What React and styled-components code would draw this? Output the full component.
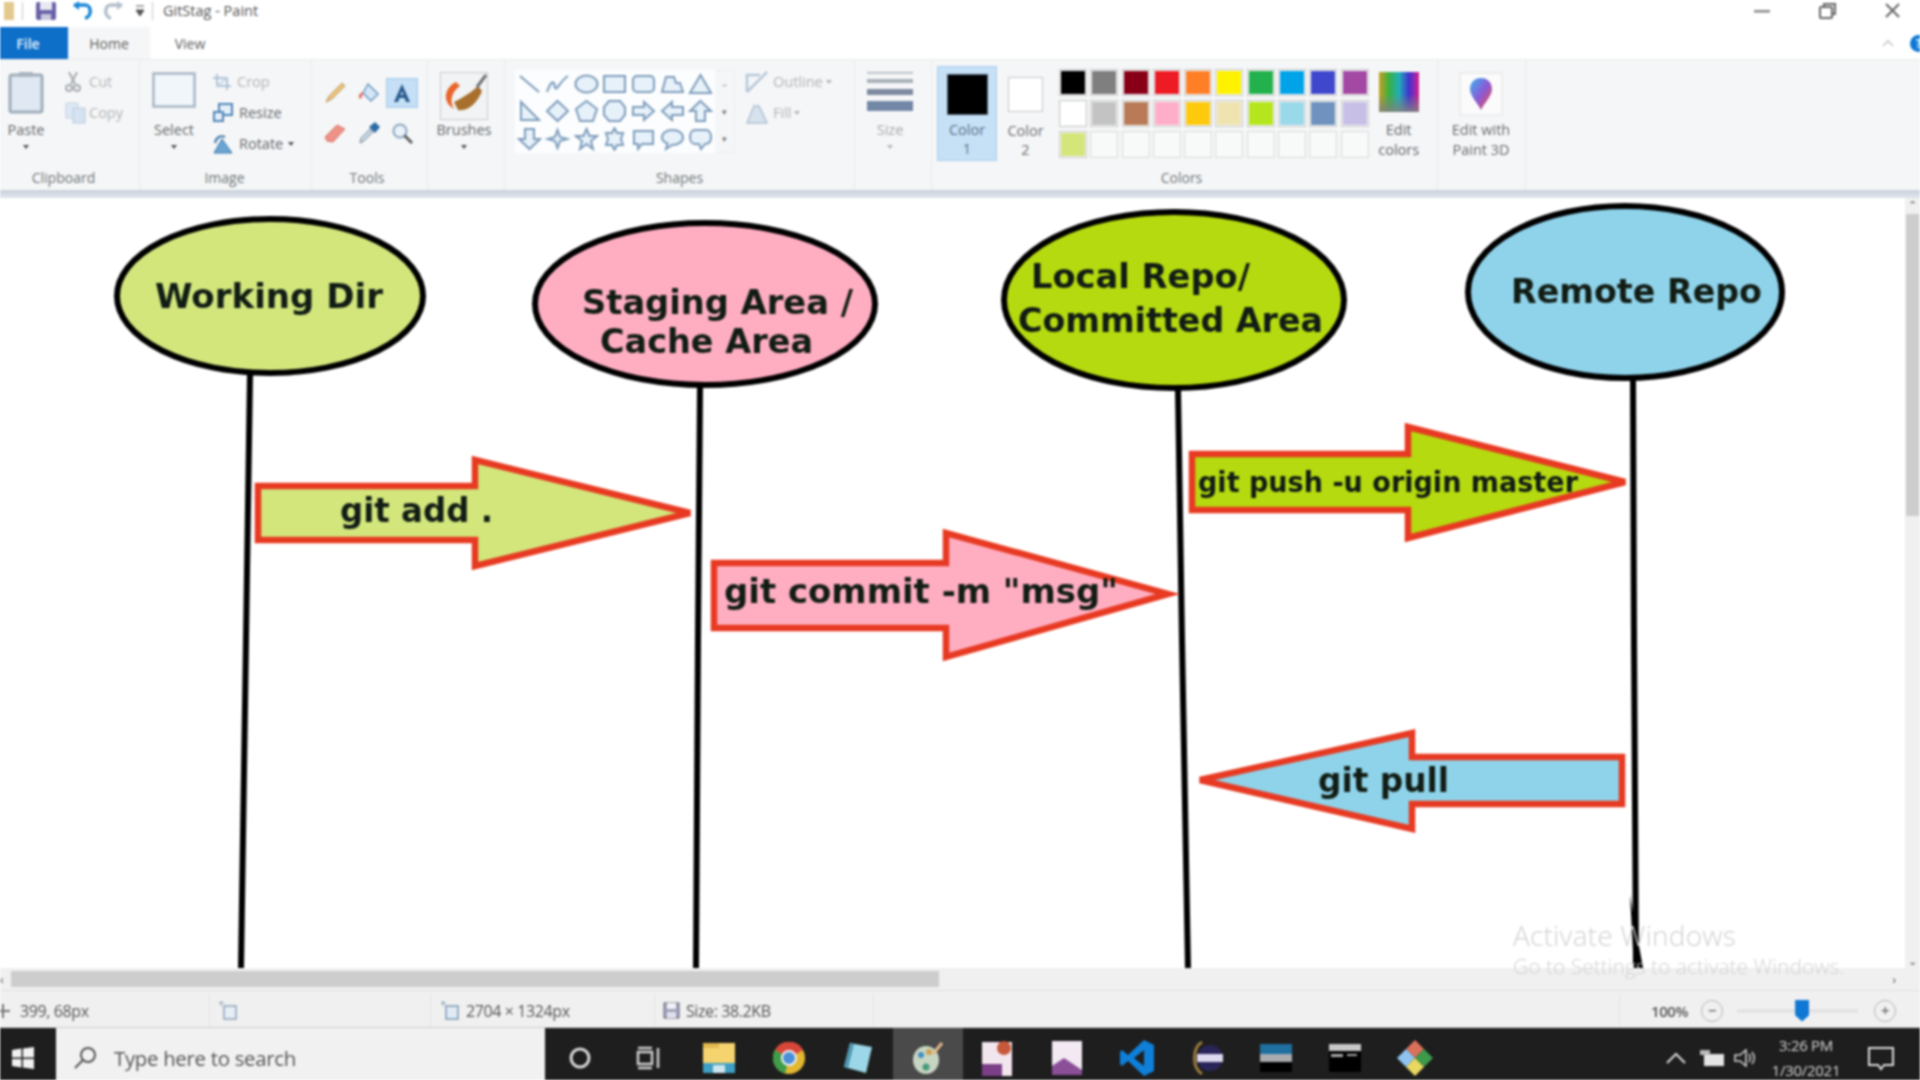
import styled, { createGlobalStyle } from "styled-components";

const GlobalStyle = createGlobalStyle`
  html, body { margin: 0; padding: 0; background: #fff; }
  body { font-family: "Open Sans", "Noto Sans", sans-serif; overflow: hidden; }
`;

const Window = styled.div`
  width: 1920px;
  height: 1080px;
  display: flex;
  flex-direction: column;
  overflow: hidden;
  position: relative;
  filter: blur(0.8px);
`;

/* title bar */
const TitleBar = styled.div`
  height: 27px;
  padding-bottom: 6px;
  box-sizing: border-box;
  display: flex;
  align-items: center;
  background: #fff;
  flex-shrink: 0;
`;
const QuickSlot = styled.div`
  width: ${(p) => p.$w}px;
  display: flex;
  justify-content: center;
  align-items: center;
`;
const Divider = styled.div`
  width: 1px;
  height: 18px;
  background: #c9c9c9;
`;
const TitleText = styled.span`
  margin-left: 10px;
  font-size: 14.5px;
  color: #555;
`;
const WindowControls = styled.div`
  margin-left: auto;
  display: flex;
  align-items: center;
  padding-right: 20px;
  gap: 49px;
`;

/* tabs */
const TabRow = styled.div`
  height: 32px;
  display: flex;
  align-items: stretch;
  background: #fff;
  flex-shrink: 0;
`;
const Tab = styled.div`
  width: ${(p) => p.$w}px;
  display: flex;
  align-items: center;
  justify-content: center;
  box-sizing: border-box;
  padding-right: ${(p) => (p.$file ? 12 : 0)}px;
  font-size: 14px;
  color: ${(p) => (p.$file ? "#e4f0fb" : "#5f5f5f")};
  background: ${(p) => (p.$file ? "#0e6fc9" : p.$active ? "#f5f6f7" : "#fff")};
  font-weight: ${(p) => (p.$file ? 600 : 400)};
`;
const TabRight = styled.div`
  margin-left: auto;
  display: flex;
  align-items: center;
  gap: 16px;
  margin-right: -7px;
`;
const HelpDot = styled.div`
  width: 17px;
  height: 17px;
  border-radius: 50%;
  background: #0f78d4;
  color: #fff;
  font-size: 12px;
  font-weight: 700;
  display: flex;
  align-items: center;
  justify-content: center;
`;

/* ribbon */
const Ribbon = styled.div`
  height: 131px;
  display: flex;
  background: #f5f6f7;
  border-top: 1px solid #e8e9ea;
  box-sizing: border-box;
  flex-shrink: 0;
`;
const Group = styled.div`
  width: ${(p) => p.$w}px;
  display: flex;
  flex-direction: column;
  border-right: 1px solid #e7e9eb;
  box-sizing: border-box;
`;
const GroupBody = styled.div`
  flex: 1;
  display: flex;
  align-items: flex-start;
  padding-top: 6px;
  padding-left: ${(p) => p.$pad || 0}px;
`;
const GroupLabel = styled.div`
  height: 24px;
  line-height: 24px;
  text-align: center;
  padding-right: ${(p) => p.$pr || 0}px;
  font-size: 14px;
  color: #70767a;
`;
const RibbonEdge = styled.div`
  height: 8px;
  background: linear-gradient(#c9d0da, #dfe6ee);
  flex-shrink: 0;
`;
const LargeButton = styled.div`
  width: ${(p) => p.$w}px;
  margin-top: 4px;
  display: flex;
  flex-direction: column;
  align-items: center;
  text-align: center;
  font-size: 14.5px;
  line-height: 20px;
  color: ${(p) => (p.$muted ? "#a9adb1" : "#666a6e")};
`;
const IconSlot = styled.div`
  height: 50px;
  display: flex;
  align-items: flex-start;
  justify-content: center;
  padding-top: 2px;
  box-sizing: border-box;
`;
const Caret = styled.div`
  width: 0;
  height: 0;
  margin-top: 5px;
  border-left: 3.5px solid transparent;
  border-right: 3.5px solid transparent;
  border-top: 4px solid ${(p) => (p.$muted ? "#b5b5b5" : "#555")};
`;
const SmallStack = styled.div`
  margin-left: ${(p) => p.$ml || 0}px;
  display: flex;
  flex-direction: column;
`;
const SmallItem = styled.div`
  height: 31px;
  display: flex;
  align-items: center;
  gap: ${(p) => p.$gap || 6}px;
  font-size: 14.5px;
  color: ${(p) => (p.$muted ? "#b4b8bb" : "#666a6e")};
`;
const InlineCaret = styled(Caret)`
  margin-top: 0;
  margin-left: -1px;
`;
const ToolGrid = styled.div`
  margin: 12px 0 0 7px;
  display: grid;
  grid-template-columns: repeat(3, 32px);
  grid-auto-rows: 30px;
  gap: 10px 1.5px;
`;
const ToolCell = styled.div`
  display: flex;
  align-items: center;
  justify-content: center;
  background: ${(p) => (p.$active ? "#c4dff6" : "transparent")};
  border: 1px solid ${(p) => (p.$active ? "#a5cdee" : "transparent")};
  box-sizing: border-box;
`;
const ShapeGallery = styled.div`
  margin-top: 4px;
  width: 200px;
  height: 83px;
  display: grid;
  grid-template-columns: repeat(7, 1fr);
  grid-auto-rows: 1fr;
  background: #fbfdfe;
  align-items: center;
  justify-items: center;
`;
const GalleryScroll = styled.div`
  margin-top: 4px;
  width: 20px;
  height: 83px;
  display: flex;
  flex-direction: column;
  align-items: center;
  justify-content: space-around;
  border: 1px solid #eceeef;
  border-left: none;
  box-sizing: border-box;
  font-size: 9px;
  color: #777;
`;
const ColorButton = styled.div`
  width: ${(p) => p.$w}px;
  height: 95px;
  margin-left: ${(p) => p.$ml || 0}px;
  display: flex;
  flex-direction: column;
  align-items: center;
  box-sizing: border-box;
  background: ${(p) => (p.$active ? "#c6e0f6" : "transparent")};
  border: 1px solid ${(p) => (p.$active ? "#a9cfee" : "transparent")};
  font-size: 14.5px;
  line-height: 19px;
  text-align: center;
  color: ${(p) => (p.$active ? "#5b7288" : "#6f7276")};
`;
const CurrentSwatch = styled.div`
  width: ${(p) => p.$size}px;
  height: ${(p) => p.$size}px;
  margin-top: ${(p) => p.$mt}px;
  margin-bottom: ${(p) => p.$mb}px;
  background: ${(p) => p.$color};
  border: 1px solid ${(p) => (p.$color === "#000" ? "#4f6170" : "#c6c6c6")};
  box-sizing: border-box;
`;
const PaletteGrid = styled.div`
  margin: 3px 0 0 5px;
  display: grid;
  grid-template-columns: repeat(10, 28px);
  grid-auto-rows: 27px;
  gap: 4px 3.3px;
`;
const PaletteCell = styled.div`
  background: ${(p) => p.$color || "#f8f9f9"};
  border: 1px solid ${(p) => (p.$color ? "#c9c9c9" : "#dcdcdc")};
  box-shadow: inset 0 0 0 1px #f5f6f7;
  box-sizing: border-box;
`;

/* canvas */
const Workspace = styled.div`
  flex: 1;
  display: flex;
  min-height: 0;
  position: relative;
`;
const Canvas = styled.div`
  width: 1905px;
  background: #fff;
  position: relative;
`;
const DiagramSvg = styled.svg`
  display: block;
  width: 1905px;
  height: 770px;
`;
const DiagramLabel = styled.text`
  font-family: "DejaVu Sans", sans-serif;
  font-weight: 700;
  fill: #111c14;
`;
const VScroll = styled.div`
  flex: 1;
  background: #f0f0f0;
  display: flex;
  flex-direction: column;
  align-items: center;
  position: relative;
`;
const VThumb = styled.div`
  width: 13px;
  height: 302px;
  margin-top: 2px;
  background: #cdcdcd;
`;
const ScrollArrow = styled.div`
  font-size: 11px;
  line-height: 14px;
  color: #555;
  margin-top: ${(p) => (p.$auto ? "auto" : "0")};
`;
const HScroll = styled.div`
  height: 22px;
  flex-shrink: 0;
  background: #f0f0f0;
  display: flex;
  align-items: center;
  color: #555;
  font-size: 12px;
`;
const HThumb = styled.div`
  width: 928px;
  height: 16px;
  margin-left: 7px;
  background: #cdcdcd;
`;
const HArrowEnd = styled.span`
  margin-left: auto;
  margin-right: 24px;
`;
const Watermark = styled.div`
  position: absolute;
  left: 1513px;
  top: 720px;
  color: #d2d2d2;
  pointer-events: none;
  z-index: 2;
`;
const WatermarkTitle = styled.div`
  font-size: 28px;
  font-weight: 300;
  line-height: 34px;
  letter-spacing: 0.2px;
`;
const WatermarkSub = styled.div`
  font-size: 21px;
  line-height: 28px;
  font-weight: 300;
  white-space: nowrap;
`;

/* status bar */
const StatusBar = styled.div`
  height: 38px;
  padding-top: 3px;
  flex-shrink: 0;
  display: flex;
  align-items: center;
  background: #f0f0f0;
  border-top: 1px solid #e2e2e2;
  border-bottom: 1px solid #cfcfcf;
  box-sizing: border-box;
  font-size: 16px;
  letter-spacing: -0.4px;
  color: #555;
`;
const StatusCell = styled.div`
  width: ${(p) => p.$w}px;
  height: 100%;
  display: flex;
  align-items: center;
  gap: 6px;
  padding-left: ${(p) => p.$pad}px;
  box-sizing: border-box;
  border-right: 1px solid #e3e3e3;
`;
const ZoomArea = styled.div`
  flex: 1;
  display: flex;
  align-items: center;
  padding-left: 31px;
  font-size: 15px;
  font-weight: 600;
`;
const ZoomCircle = styled.div`
  width: 22px;
  height: 22px;
  margin-left: ${(p) => p.$ml}px;
  border-radius: 50%;
  border: 1.5px solid #b7b7b7;
  box-sizing: border-box;
  display: flex;
  align-items: center;
  justify-content: center;
  font-size: 15px;
  line-height: 1;
  color: #666;
`;
const ZoomTrack = styled.div`
  width: 121px;
  height: 4px;
  margin-left: 14px;
  background: #e3e3e3;
  position: relative;
`;
const ZoomThumb = styled.div`
  position: absolute;
  left: 58px;
  top: -9px;
  width: 14px;
  height: 22px;
  background: #0f78d4;
  clip-path: polygon(0 0, 100% 0, 100% 72%, 50% 100%, 0 72%);
`;

/* taskbar */
const Taskbar = styled.div`
  height: 52px;
  padding-top: 7px;
  box-sizing: border-box;
  flex-shrink: 0;
  display: flex;
  align-items: stretch;
  background: #1e1e1e;
`;
const StartButton = styled.div`
  width: 56px;
  padding-right: 10px;
  box-sizing: border-box;
  display: flex;
  align-items: center;
  justify-content: center;
`;
const SearchBox = styled.div`
  width: 489px;
  margin-top: -7px;
  padding-top: 7px;
  background: #f1f1f1;
  display: flex;
  align-items: center;
  padding-left: 17px;
  gap: 17px;
  box-sizing: border-box;
  font-size: 20.4px;
  letter-spacing: -0.3px;
  color: #555;
`;
const TaskSlot = styled.div`
  width: 69.6px;
  margin-top: ${(p) => (p.$active ? -7 : 0)}px;
  padding-top: ${(p) => (p.$active ? 7 : 0)}px;
  display: flex;
  align-items: center;
  justify-content: center;
  background: ${(p) => (p.$active ? "#4a4a4a" : "transparent")};
`;
const Tray = styled.div`
  margin-left: auto;
  display: flex;
  align-items: center;
  padding-right: 26px;
`;
const TrayItem = styled.div`
  margin-left: ${(p) => p.$ml}px;
  display: flex;
  align-items: center;
`;
const Clock = styled.div`
  margin-left: 10px;
  width: 80px;
  text-align: center;
  font-size: 15px;
  line-height: 25px;
  letter-spacing: -0.3px;
  color: #d8d8d8;
`;

const BLUE = "#7f9dbb";
const TINT = "#e6f1fa";

const shapes = [
  <path d="M3 4 L22 20" />,
  <path d="M2 20 C6 8 9 8 10 15 C11 21 15 9 23 4" />,
  <ellipse cx="12.5" cy="12" rx="11" ry="8.5" />,
  <rect x="2" y="4" width="21" height="16" />,
  <rect x="2" y="4" width="21" height="16" rx="4" />,
  <path d="M2 20 L6 5 H14 L16 11 H20 L23 20 Z" />,
  <path d="M12.5 3 L23 21 H2 Z" />,
  <path d="M4 3 V21 H22 Z" />,
  <path d="M12.5 2 L23 12 L12.5 22 L2 12 Z" />,
  <path d="M12.5 2 L23 10 L19 22 H6 L2 10 Z" />,
  <path d="M7 2 H18 L23 8 V16 L18 22 H7 L2 16 V8 Z" />,
  <path d="M2 8 H13 V3 L23 12 L13 21 V16 H2 Z" />,
  <path d="M23 8 H12 V3 L2 12 L12 21 V16 H23 Z" />,
  <path d="M12.5 2 L23 12 H17 V22 H8 V12 H2 Z" />,
  <path d="M12.5 22 L23 12 H17 V2 H8 V12 H2 Z" />,
  <path d="M12.5 3 L15 10 L22 12 L15 14 L12.5 21 L10 14 L3 12 L10 10 Z" />,
  <path d="M12.5 2 L15.5 9 H23 L17 14 L19 22 L12.5 17 L6 22 L8 14 L2 9 H9.5 Z" />,
  <path d="M12.5 1 L15 6 H21 L19 12 L21 18 H15 L12.5 23 L10 18 H4 L6 12 L4 6 H10 Z" />,
  <path d="M3 4 H22 V17 H11 L7 22 V17 H3 Z" />,
  <path d="M12.5 3 C19 3 23 6.5 23 10.5 C23 15 18 18 12 18 L6 22 L7.5 16.5 C4 15 2 13 2 10.5 C2 6.5 6 3 12.5 3 Z" />,
  <path d="M7 3 H18 C21 3 23 6 23 10 C23 14 21 17 17 17 L13 22 L11 17 H7 C4 17 2 14 2 10 C2 6 4 3 7 3 Z" />,
];

const palette = [
  "#000", "#7f7f7f", "#880015", "#ed1c24", "#ff7f27", "#fff200", "#22b14c", "#00a2e8", "#3f48cc", "#a349a4",
  "#fff", "#c3c3c3", "#b97a57", "#ffaec9", "#ffc90e", "#efe4b0", "#b5e61d", "#99d9ea", "#7092be", "#c8bfe7",
  "#d4e57a", null, null, null, null, null, null, null, null, null,
];

const nodes = [
  { cx: 270, cy: 296, rx: 153, ry: 77, fill: "#d2e67c" },
  { cx: 705, cy: 304, rx: 170, ry: 81, fill: "#ffaec2" },
  { cx: 1174, cy: 300, rx: 170, ry: 88, fill: "#b5da10" },
  { cx: 1625, cy: 292, rx: 157, ry: 86, fill: "#8fd3ea" },
];

const lifelines = [
  "M250 374 L246 640 L241 968",
  "M700 386 L698 640 L696 968",
  "M1178 389 L1182 640 L1188 968",
  "M1633 380 L1634 640 L1636 968",
];

const arrows = [
  { d: "M258 486 H475 V460 L690 513 L475 566 V540 H258 Z", fill: "#d2e67c" },
  { d: "M714 563 H946 V533 L1168 594 L946 657 V628 H714 Z", fill: "#ffaec2" },
  { d: "M1192 454 H1408 V427 L1625 482 L1408 538 V510 H1192 Z", fill: "#b5da10" },
  { d: "M1622 757 H1412 V733 L1200 780 L1412 829 V804 H1622 Z", fill: "#8fd3ea" },
];

const labels = [
  { text: "Working Dir", x: 155, y: 308, w: 228, size: 33 },
  { text: "Staging Area /", x: 582, y: 314, w: 271, size: 33 },
  { text: "Cache Area", x: 600, y: 353, w: 213, size: 33 },
  { text: "Local Repo/", x: 1031, y: 288, w: 219, size: 33 },
  { text: "Committed Area", x: 1018, y: 332, w: 305, size: 33 },
  { text: "Remote Repo", x: 1511, y: 303, w: 251, size: 33 },
  { text: "git add .", x: 340, y: 522, w: 153, size: 34 },
  { text: 'git commit -m "msg"', x: 724, y: 603, w: 394, size: 34 },
  { text: "git push -u origin master", x: 1198, y: 492, w: 380, size: 28 },
  { text: "git pull", x: 1318, y: 792, w: 131, size: 34 },
];

function Diagram() {
  return (
    <DiagramSvg viewBox="0 198 1905 770">
      {lifelines.map((d) => (
        <path key={d} d={d} fill="none" stroke="#000" strokeWidth="6" />
      ))}
      <path d="M1630 895 L1634 968 L1643 968 L1637 935 Z" fill="#000" />
      {nodes.map((n) => (
        <ellipse key={n.cx} cx={n.cx} cy={n.cy} rx={n.rx} ry={n.ry} fill={n.fill} stroke="#000" strokeWidth="6" />
      ))}
      {arrows.map((a) => (
        <path key={a.d} d={a.d} fill={a.fill} stroke="#e83a22" strokeWidth="6.5" strokeLinejoin="miter" />
      ))}
      {labels.map((l) => (
        <DiagramLabel key={l.text} x={l.x} y={l.y} fontSize={l.size} textLength={l.w} lengthAdjust="spacingAndGlyphs">
          {l.text}
        </DiagramLabel>
      ))}
    </DiagramSvg>
  );
}

const Ico = ({ w, h, children }) => (
  <svg width={w} height={h} viewBox={`0 0 ${w} ${h}`} style={{ display: "block" }}>
    {children}
  </svg>
);

const PasteIcon = () => (
  <Ico w={36} h={42}>
    <rect x="2" y="3" width="32" height="37" rx="2" fill="#dfe8f3" stroke="#9fadbb" strokeWidth="3" />
    <rect x="11" y="0" width="14" height="5" fill="#aab5c0" />
  </Ico>
);
const CutIcon = () => (
  <Ico w={16} h={20}>
    <path d="M4 0 L10 12 M12 0 L6 12" stroke="#a9adb2" strokeWidth="2" />
    <circle cx="4" cy="16" r="3" fill="none" stroke="#a9adb2" strokeWidth="2" />
    <circle cx="12" cy="16" r="3" fill="none" stroke="#a9adb2" strokeWidth="2" />
  </Ico>
);
const CopyIcon = () => (
  <Ico w={22} h={22}>
    <rect x="1" y="1" width="12" height="15" fill="#dde8f4" stroke="#c3d2e2" />
    <rect x="8" y="6" width="12" height="15" fill="#d4e2f1" stroke="#b9cde0" />
  </Ico>
);
const SelectIcon = () => (
  <Ico w={44} h={36}>
    <rect x="1.5" y="1.5" width="41" height="33" fill="#f1f6fb" stroke="#a8b7c6" strokeWidth="2.5" />
  </Ico>
);
const CropIcon = () => (
  <Ico w={18} h={16}>
    <path d="M4 0 V12 H18 M0 4 H14 V16" fill="none" stroke="#afc3d8" strokeWidth="2" />
    <path d="M4 12 L14 4" stroke="#c5d5e5" strokeWidth="2" />
  </Ico>
);
const ResizeIcon = () => (
  <Ico w={20} h={20}>
    <rect x="6" y="1" width="13" height="11" fill="#e4eef8" stroke="#4f86b8" strokeWidth="2" />
    <rect x="1" y="9" width="9" height="9" fill="#e4eef8" stroke="#4f86b8" strokeWidth="2" />
  </Ico>
);
const RotateIcon = () => (
  <Ico w={20} h={20}>
    <path d="M1 19 L9 5 L19 19 Z" fill="#6aa5d4" stroke="#3d78aa" />
    <path d="M2 9 C3 3 8 1 12 3" fill="none" stroke="#3d78aa" strokeWidth="2" />
  </Ico>
);
const PencilIcon = () => (
  <Ico w={24} h={24}>
    <path d="M3 21 L6 15 L19 2 L22 5 L9 18 Z" fill="#ecc27c" stroke="#b89b6a" />
  </Ico>
);
const FillIcon = () => (
  <Ico w={24} h={24}>
    <path d="M11 3 L21 13 L14 20 L6 12 Z" fill="#d3e6f5" stroke="#6f9cc2" strokeWidth="1.5" />
    <path d="M6 11 C1 12 1 17 3 18 C5 17 6 14 6 11 Z" fill="#e8756a" />
  </Ico>
);
const TextIcon = () => (
  <Ico w={22} h={22}>
    <path d="M11 2 L19 20 H15 L13.5 16 H8.5 L7 20 H3 Z M9.6 13 H12.4 L11 9 Z" fill="#2a5a8c" fillRule="evenodd" />
  </Ico>
);
const EraserIcon = () => (
  <Ico w={24} h={22}>
    <path d="M2 15 L14 3 L22 7 L10 20 L4 19 Z" fill="#ee9186" stroke="#d9766b" />
  </Ico>
);
const PickerIcon = () => (
  <Ico w={24} h={24}>
    <path d="M3 22 L4 17 L13 8 L16 11 L7 20 Z" fill="#c5d6e5" stroke="#7d8d9b" />
    <path d="M12 6 L18 1 L23 6 L18 12 Z" fill="#2c6aa6" />
  </Ico>
);
const MagnifyIcon = () => (
  <Ico w={22} h={22}>
    <circle cx="9" cy="9" r="6.5" fill="#e9f2fa" stroke="#8ba6bf" strokeWidth="2" />
    <path d="M13.5 13.5 L21 21" stroke="#5d5d5d" strokeWidth="3" />
  </Ico>
);
const BrushIcon = () => (
  <Ico w={48} h={48}>
    <rect x="0.5" y="0.5" width="47" height="47" fill="#f1f3f4" stroke="#c8cbce" />
    <path d="M16 10 C4 16 2 30 14 37 C9 28 12 20 20 14 Z" fill="#e8662a" />
    <path d="M14 30 C22 26 32 20 38 14 L42 19 C38 30 28 40 18 38 Z" fill="#a8702c" />
    <path d="M37 15 L46 3" stroke="#6c7278" strokeWidth="3" />
  </Ico>
);
const OutlineIcon = () => (
  <Ico w={24} h={24}>
    <path d="M2 22 V5 H15 M2 22 L22 2" fill="none" stroke="#b7c8d9" strokeWidth="2.5" />
  </Ico>
);
const ShapeFillIcon = () => (
  <Ico w={24} h={24}>
    <path d="M2 22 L9 5 H14 L22 22 Z" fill="#d7e2ed" stroke="#b0c2d4" strokeWidth="1.5" />
  </Ico>
);
const SizeIcon = () => (
  <Ico w={46} h={40}>
    <rect y="0" width="46" height="1.5" fill="#aab2bb" />
    <rect y="7" width="46" height="4" fill="#a9b1ba" />
    <rect y="17" width="46" height="6" fill="#7e8aa0" />
    <rect y="29" width="46" height="10" fill="#7388a6" />
  </Ico>
);
const EditColorsIcon = () => (
  <Ico w={40} h={40}>
    <defs>
      <linearGradient id="rainbow" x1="0" x2="1" y1="0" y2="0">
        <stop offset="0" stopColor="#c8a020" />
        <stop offset="0.25" stopColor="#38b040" />
        <stop offset="0.5" stopColor="#20b0b8" />
        <stop offset="0.75" stopColor="#4030d0" />
        <stop offset="1" stopColor="#d82090" />
      </linearGradient>
      <linearGradient id="shade" x1="0" x2="0" y1="0" y2="1">
        <stop offset="0.55" stopColor="#808080" stopOpacity="0" />
        <stop offset="1" stopColor="#808080" stopOpacity="0.9" />
      </linearGradient>
    </defs>
    <rect width="40" height="40" fill="url(#rainbow)" />
    <rect width="40" height="40" fill="url(#shade)" />
  </Ico>
);
const Paint3dIcon = () => (
  <Ico w={44} h={44}>
    <defs>
      <linearGradient id="drop" x1="0" x2="1" y1="0" y2="1">
        <stop offset="0" stopColor="#3cb4f0" />
        <stop offset="0.5" stopColor="#8a5ad8" />
        <stop offset="1" stopColor="#f0503c" />
      </linearGradient>
    </defs>
    <rect x="1" y="1" width="42" height="42" fill="#fbfbfb" stroke="#e2e2e2" />
    <path d="M22 6 C30 6 33 12 33 17 C33 24 26 30 22 38 C18 30 11 24 11 17 C11 12 14 6 22 6 Z" fill="url(#drop)" />
  </Ico>
);

const WindowsLogo = () => (
  <Ico w={22} h={22}>
    <path d="M0 3 L9.5 1.6 V10.5 H0 Z M11 1.4 L22 0 V10.5 H11 Z M0 12 H9.5 V20.4 L0 19 Z M11 12 H22 V22 L11 20.6 Z" fill="#f2f2f2" />
  </Ico>
);

const taskIcons = [
  <Ico key="a" w={24} h={24}><circle cx="12" cy="12" r="9" fill="none" stroke="#d8d8d8" strokeWidth="3" /></Ico>,
  <Ico key="b" w={26} h={24}>
    <rect x="2" y="6" width="14" height="12" fill="none" stroke="#cfcfcf" strokeWidth="2.5" />
    <path d="M2 2 H16 M2 22 H16 M22 2 V22" stroke="#cfcfcf" strokeWidth="2.5" />
  </Ico>,
  <Ico key="c" w={32} h={30}>
    <rect x="0" y="0" width="32" height="30" fill="#f5d470" />
    <rect x="0" y="0" width="16" height="5" fill="#e2b94e" />
    <rect x="0" y="20" width="32" height="10" fill="#3f9fc4" />
    <rect x="10" y="22" width="12" height="8" fill="#cfe5ee" />
  </Ico>,
  <Ico key="d" w={32} h={32}>
    <circle cx="16" cy="16" r="16" fill="#e2b830" />
    <path d="M16 16 L2 8 A16 16 0 0 1 30 8 Z" fill="#d9463a" />
    <path d="M16 16 L2 8 A16 16 0 0 0 12 31.5 Z" fill="#3e9c4a" />
    <circle cx="16" cy="16" r="7" fill="#4a8fd8" stroke="#f0f0f0" strokeWidth="2" />
  </Ico>,
  <Ico key="e" w={32} h={34}>
    <path d="M8 2 L30 6 L24 32 L2 26 Z" fill="#9bd7e8" />
    <path d="M2 26 L8 2 L12 3 L6 27 Z" fill="#4f97b3" />
  </Ico>,
  <Ico key="f" w={34} h={36}>
    <ellipse cx="15" cy="20" rx="13" ry="14" fill="#c7d5c2" />
    <circle cx="10" cy="15" r="3" fill="#3f8fc0" />
    <circle cx="18" cy="12" r="3" fill="#d0a050" />
    <circle cx="15" cy="27" r="3.5" fill="#4a9a7a" />
    <path d="M22 14 L31 3" stroke="#e4b98a" strokeWidth="3" />
  </Ico>,
  <Ico key="g" w={30} h={36}>
    <rect x="0" y="2" width="30" height="34" fill="#f2e6ee" />
    <rect x="0" y="24" width="20" height="12" fill="#7a3f86" />
    <circle cx="22" cy="8" r="7" fill="#c8583a" />
  </Ico>,
  <Ico key="h" w={30} h={36}>
    <rect x="0" y="1" width="30" height="34" fill="#f3e9f2" />
    <path d="M0 35 V26 L12 18 L30 30 V35 Z" fill="#8b4f98" />
  </Ico>,
  <Ico key="i" w={34} h={36}>
    <path d="M24 0 L34 5 V31 L24 36 L8 21 L2 26 L0 24 V12 L2 10 L8 15 Z M24 10 L14 18 L24 26 Z" fill="#0f7fd8" fillRule="evenodd" />
  </Ico>,
  <Ico key="j" w={36} h={36}>
    <path d="M14 2 C4 8 4 28 14 34" fill="none" stroke="#9a7a3c" strokeWidth="3" />
    <circle cx="22" cy="18" r="13" fill="#2a2558" />
    <rect x="9" y="14" width="26" height="8" fill="#ded8f0" />
  </Ico>,
  <Ico key="k" w={32} h={28}>
    <rect width="32" height="10" y="0" fill="#1f6fa0" />
    <rect width="32" height="8" y="10" fill="#d8dbe0" opacity="0.75" />
    <rect width="32" height="10" y="18" fill="#000" />
  </Ico>,
  <Ico key="l" w={32} h={28}>
    <rect width="32" height="7" y="0" fill="#c8c8c8" />
    <rect width="32" height="21" y="7" fill="#000" />
    <path d="M2 10 H14 V13 H2 Z M18 10 H28 V12 H18 Z" fill="#a8a8a8" />
  </Ico>,
  <Ico key="m" w={36} h={36}>
    <path d="M18 0 L27 9 L18 18 L9 9 Z" fill="#d9705a" />
    <path d="M27 9 L36 18 L27 27 L18 18 Z" fill="#3c9a4a" />
    <path d="M9 9 L18 18 L9 27 L0 18 Z" fill="#8fc4f0" />
    <path d="M18 18 L27 27 L18 36 L9 27 Z" fill="#e8d860" />
  </Ico>,
];

export default function App() {
  return (
    <>
      <GlobalStyle />
      <Window>
        <TitleBar>
          <QuickSlot $w={22}>
            <Ico w={14} h={20}><rect x="-4" y="1" width="14" height="18" fill="#e3c98f" /></Ico>
          </QuickSlot>
          <Divider />
          <QuickSlot $w={45}>
            <Ico w={22} h={20}>
              <rect x="1" y="1" width="20" height="18" rx="2" fill="#6a62a8" />
              <rect x="5" y="1" width="12" height="8" fill="#e8e8f2" />
              <rect x="6" y="13" width="10" height="6" fill="#c8c8dc" />
            </Ico>
          </QuickSlot>
          <QuickSlot $w={30}>
            <Ico w={22} h={20}>
              <path d="M2 4 H13 C20 4 20 16 13 17" fill="none" stroke="#1a88d8" strokeWidth="3.5" />
              <path d="M7 0 L1 4.5 L7 9 Z" fill="#1a88d8" />
            </Ico>
          </QuickSlot>
          <QuickSlot $w={30}>
            <Ico w={22} h={20}>
              <path d="M20 4 H9 C2 4 2 16 9 17" fill="none" stroke="#b5c0cb" strokeWidth="3.5" />
              <path d="M15 0 L21 4.5 L15 9 Z" fill="#b5c0cb" />
            </Ico>
          </QuickSlot>
          <QuickSlot $w={24}>
            <Ico w={10} h={12}><path d="M1 1 H9 M1 5 H9 L5 11 L1 5" fill="#555" stroke="#555" /></Ico>
          </QuickSlot>
          <Divider />
          <TitleText>GitStag - Paint</TitleText>
          <WindowControls>
            <Ico w={16} h={4}><rect width="16" height="2.5" y="1" fill="#8a8a8a" /></Ico>
            <Ico w={17} h={16}>
              <path d="M5 4 V1 H16 V11 H13" fill="none" stroke="#666" strokeWidth="2" />
              <rect x="1" y="4" width="12" height="11" rx="1" fill="none" stroke="#666" strokeWidth="2" />
            </Ico>
            <Ico w={15} h={15}><path d="M1 1 L14 14 M14 1 L1 14" stroke="#666" strokeWidth="2" /></Ico>
          </WindowControls>
        </TitleBar>

        <TabRow>
          <Tab $w={68} $file>File</Tab>
          <Tab $w={82} $active>Home</Tab>
          <Tab $w={80}>View</Tab>
          <TabRight>
            <Ico w={12} h={8}><path d="M1 7 L6 2 L11 7" fill="none" stroke="#c4c9d0" strokeWidth="1.6" /></Ico>
            <HelpDot>?</HelpDot>
          </TabRight>
        </TabRow>

        <Ribbon>
          <Group $w={140}>
            <GroupBody>
              <LargeButton $w={52}>
                <IconSlot><PasteIcon /></IconSlot>
                Paste
                <Caret />
              </LargeButton>
              <SmallStack $ml={13}>
                <SmallItem $muted $gap={8}><CutIcon />Cut</SmallItem>
                <SmallItem $muted $gap={2}><CopyIcon />Copy</SmallItem>
              </SmallStack>
            </GroupBody>
            <GroupLabel $pr={12}>Clipboard</GroupLabel>
          </Group>

          <Group $w={172}>
            <GroupBody>
              <LargeButton $w={68}>
                <IconSlot><SelectIcon /></IconSlot>
                Select
                <Caret />
              </LargeButton>
              <SmallStack $ml={5}>
                <SmallItem $muted><CropIcon />Crop</SmallItem>
                <SmallItem><ResizeIcon />Resize</SmallItem>
                <SmallItem><RotateIcon />Rotate<InlineCaret /></SmallItem>
              </SmallStack>
            </GroupBody>
            <GroupLabel $pr={2}>Image</GroupLabel>
          </Group>

          <Group $w={116}>
            <GroupBody>
              <ToolGrid>
                <ToolCell><PencilIcon /></ToolCell>
                <ToolCell><FillIcon /></ToolCell>
                <ToolCell $active><TextIcon /></ToolCell>
                <ToolCell><EraserIcon /></ToolCell>
                <ToolCell><PickerIcon /></ToolCell>
                <ToolCell><MagnifyIcon /></ToolCell>
              </ToolGrid>
            </GroupBody>
            <GroupLabel $pr={5}>Tools</GroupLabel>
          </Group>

          <Group $w={77}>
            <GroupBody>
              <LargeButton $w={72}>
                <IconSlot><BrushIcon /></IconSlot>
                Brushes
                <Caret />
              </LargeButton>
            </GroupBody>
            <GroupLabel />
          </Group>

          <Group $w={350}>
            <GroupBody $pad={10}>
              <ShapeGallery>
                {shapes.map((s, i) => (
                  <svg key={i} width="25" height="24" viewBox="0 0 25 24" fill={TINT} stroke={BLUE} strokeWidth="2">
                    {s}
                  </svg>
                ))}
              </ShapeGallery>
              <GalleryScroll>
                <span>–</span>
                <span>▾</span>
                <span>▾</span>
              </GalleryScroll>
              <SmallStack $ml={10}>
                <SmallItem $muted $gap={4}><OutlineIcon />Outline<InlineCaret $muted /></SmallItem>
                <SmallItem $muted $gap={4}><ShapeFillIcon />Fill<InlineCaret $muted /></SmallItem>
              </SmallStack>
            </GroupBody>
            <GroupLabel>Shapes</GroupLabel>
          </Group>

          <Group $w={77}>
            <GroupBody>
              <LargeButton $w={70} $muted>
                <IconSlot><SizeIcon /></IconSlot>
                Size
                <Caret $muted />
              </LargeButton>
            </GroupBody>
            <GroupLabel />
          </Group>

          <Group $w={506}>
            <GroupBody>
              <ColorButton $w={60} $ml={5} $active>
                <CurrentSwatch $color="#000" $size={41} $mt={7} $mb={5} />
                Color<br />1
              </ColorButton>
              <ColorButton $w={57}>
                <CurrentSwatch $color="#fff" $size={35} $mt={10} $mb={9} />
                Color<br />2
              </ColorButton>
              <PaletteGrid>
                {palette.map((c, i) => (
                  <PaletteCell key={i} $color={c} />
                ))}
              </PaletteGrid>
              <LargeButton $w={60}>
                <IconSlot><EditColorsIcon /></IconSlot>
                Edit<br />colors
              </LargeButton>
            </GroupBody>
            <GroupLabel $pr={6}>Colors</GroupLabel>
          </Group>

          <Group $w={88}>
            <GroupBody>
              <LargeButton $w={86}>
                <IconSlot><Paint3dIcon /></IconSlot>
                Edit with<br />Paint 3D
              </LargeButton>
            </GroupBody>
            <GroupLabel />
          </Group>
        </Ribbon>
        <RibbonEdge />

        <Workspace>
          <Canvas>
            <Diagram />
            <Watermark>
              <WatermarkTitle>Activate Windows</WatermarkTitle>
              <WatermarkSub>Go to Settings to activate Windows.</WatermarkSub>
            </Watermark>
          </Canvas>
          <VScroll>
            <ScrollArrow>⌃</ScrollArrow>
            <VThumb />
            <ScrollArrow $auto>⌄</ScrollArrow>
          </VScroll>
        </Workspace>

        <HScroll>
          ‹
          <HThumb />
          <HArrowEnd>›</HArrowEnd>
        </HScroll>

        <StatusBar>
          <StatusCell $w={210} $pad={0}>
            <Ico w={14} h={14}><path d="M7 0 V14 M0 7 H14" stroke="#777" strokeWidth="2" transform="translate(-4 0)" /></Ico>
            399, 68px
          </StatusCell>
          <StatusCell $w={221} $pad={8}>
            <Ico w={20} h={20}>
              <path d="M6 5 H18 V18 H6 Z" fill="#e6eef6" stroke="#8fa3b6" strokeWidth="1.5" />
              <path d="M1 2 H6 M3 0 V5" stroke="#8fa3b6" />
            </Ico>
          </StatusCell>
          <StatusCell $w={224} $pad={9}>
            <Ico w={20} h={20}>
              <path d="M6 5 H18 V18 H6 Z" fill="#dfeaf5" stroke="#7f99b2" strokeWidth="1.5" />
              <path d="M1 2 H6 M3 0 V5" stroke="#7f99b2" />
            </Ico>
            2704 × 1324px
          </StatusCell>
          <StatusCell $w={219} $pad={8}>
            <Ico w={17} h={17}>
              <rect x="1" y="1" width="15" height="15" fill="#a0a4ba" stroke="#5f6378" />
              <rect x="4" y="1" width="9" height="6" fill="#f0f0f6" />
              <rect x="4" y="10" width="9" height="6" fill="#e0e0ea" />
            </Ico>
            Size: 38.2KB
          </StatusCell>
          <StatusCell $w={746} $pad={0} />
          <ZoomArea>
            100%
            <ZoomCircle $ml={13}>−</ZoomCircle>
            <ZoomTrack><ZoomThumb /></ZoomTrack>
            <ZoomCircle $ml={16}>+</ZoomCircle>
          </ZoomArea>
        </StatusBar>

        <Taskbar>
          <StartButton><WindowsLogo /></StartButton>
          <SearchBox>
            <Ico w={24} h={24}>
              <circle cx="15" cy="9" r="7" fill="none" stroke="#555" strokeWidth="2" />
              <path d="M10 14 L2 22" stroke="#555" strokeWidth="2" />
            </Ico>
            Type here to search
          </SearchBox>
          {taskIcons.map((icon, i) => (
            <TaskSlot key={i} $active={i === 5}>{icon}</TaskSlot>
          ))}
          <Tray>
            <TrayItem $ml={0}>
              <Ico w={20} h={12}><path d="M1 11 L10 2 L19 11" fill="none" stroke="#d8d8d8" strokeWidth="2" /></Ico>
            </TrayItem>
            <TrayItem $ml={14}>
              <Ico w={24} h={16}>
                <rect x="4" y="4" width="20" height="12" fill="#e4e4e4" />
                <rect x="0" y="0" width="10" height="5" fill="#b8b8b8" />
              </Ico>
            </TrayItem>
            <TrayItem $ml={10}>
              <Ico w={22} h={18}>
                <path d="M1 6 H6 L12 1 V17 L6 12 H1 Z" fill="none" stroke="#cfcfcf" strokeWidth="1.6" />
                <path d="M15 5 C17 8 17 10 15 13 M18 3 C21 7 21 11 18 15" fill="none" stroke="#cfcfcf" strokeWidth="1.5" />
              </Ico>
            </TrayItem>
            <Clock>3:26 PM<br />1/30/2021</Clock>
            <TrayItem $ml={22}>
              <Ico w={26} h={26}>
                <path d="M1 3 H25 V20 H16 L13 24 L10 20 H1 Z" fill="none" stroke="#dcdcdc" strokeWidth="2" />
              </Ico>
            </TrayItem>
          </Tray>
        </Taskbar>
      </Window>
    </>
  );
}
